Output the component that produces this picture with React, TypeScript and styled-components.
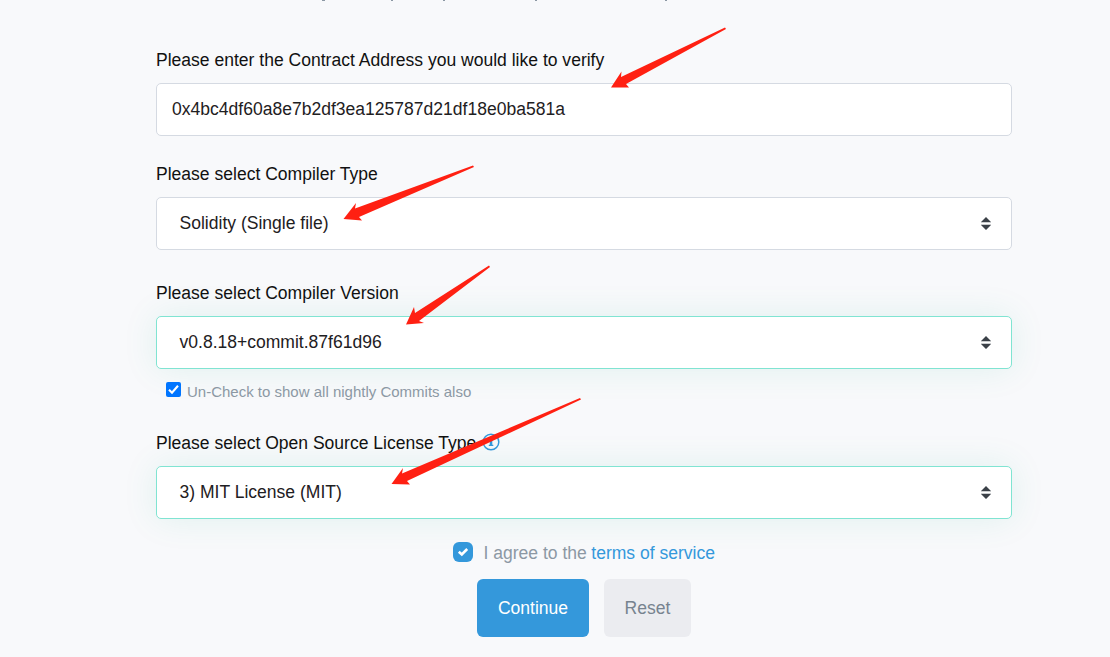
import React from "react";
import styled, { createGlobalStyle } from "styled-components";

const Global = createGlobalStyle`
  * { box-sizing: border-box; }
  body { margin: 0; background: #f8f9fb; font-family: "Liberation Sans", Arial, sans-serif; font-size: 17.55px; color: #1e2022; overflow: hidden; }
`;
const Page = styled.main`
  position: relative; width: 1110px; height: 657px; padding: 46px 98px 0 156px; overflow: hidden;
  display: flex; flex-direction: column;
`;
const Label = styled.label<{ $gap?: number }>`
  display: flex; align-items: center; height: 28px; margin: ${p => p.$gap ?? 0}px 0 9px; line-height: 28px; color: #111;
  white-space: nowrap;
`;
const InfoIcon = styled.svg`margin: -2px 0 0 6px;`;
const Field = styled.div<{ $valid?: boolean; $pad?: number }>`
  display: flex; align-items: center; justify-content: space-between; flex: none; height: 53px;
  padding: 0 19px 1px ${p => p.$pad ?? 22.5}px; background: #fff; border-radius: 5px;
  border: 1px solid ${p => (p.$valid ? "#80e4d2" : "#d5dae2")};
  box-shadow: ${p => (p.$valid ? "0 0 35px rgba(0, 170, 130, 0.1)" : "none")};
  white-space: nowrap;
`;
const Nightly = styled.label`
  display: flex; align-items: center; height: 24px; margin: 9px 0 0 10px; gap: 6px; font-size: 15px; color: #8c98a4; white-space: nowrap;
`;
const NightlyBox = styled.svg`margin-top: -2px;`;
const NightlyText = styled.span`padding-top: 2px;`;
const Agree = styled.label`
  display: flex; align-items: center; align-self: center; height: 28px; margin-top: 20px; color: #8c98a4; white-space: nowrap;
`;
const AgreeBox = styled.svg`margin: -2px 10.5px 0 0;`;
const Link = styled.a`color: #3498db; margin-left: 4.5px;`;
const Actions = styled.div`display: flex; justify-content: center; gap: 15px; margin-top: 12px;`;
const Button = styled.button<{ $primary?: boolean }>`
  width: ${p => (p.$primary ? 112 : 87)}px; height: 58px; padding: 0; border: 0; border-radius: 6px; font: inherit;
  background: ${p => (p.$primary ? "#3498db" : "#ebecf0")}; color: ${p => (p.$primary ? "#fff" : "#77838f")};
`;
const Overlay = styled.svg`position: absolute; left: 0; top: 0; pointer-events: none;`;

const Caret = () => (
  <svg width="12" height="14" viewBox="0 0 12 14">
    <path d="M6 1 11 6H1zM1 9h10L6 14z" fill="#3b4148" />
    <path d="M1 6h10v.5H1zM1 8.500h10v.5H1z" fill="#9a9da2" />
  </svg>
);

export default function App() {
  return (
    <Page>
      <Global />
      <Label><span>Please enter the Contract Address you would like to verify</span></Label>
      <Field $pad={15}><span>0x4bc4df60a8e7b2df3ea125787d21df18e0ba581a</span></Field>
      <Label $gap={24}><span>Please select Compiler Type</span></Label>
      <Field><span>Solidity (Single file)</span><Caret /></Field>
      <Label $gap={29}><span>Please select Compiler Version</span></Label>
      <Field $valid><span>v0.8.18+commit.87f61d96</span><Caret /></Field>
      <Nightly>
        <NightlyBox width="15" height="15" viewBox="0 0 15 15"><rect width="15" height="15" rx="2" fill="#0075ff" /><path d="M3 7.7 6 10.7 12 3.8" fill="none" stroke="#fff" strokeWidth="2.1" /></NightlyBox>
        <NightlyText>Un-Check to show all nightly Commits also</NightlyText>
      </Nightly>
      <Label $gap={27}><span>Please select Open Source License Type</span>
        <InfoIcon width="18" height="18" viewBox="0 0 18 18"><circle cx="9" cy="9" r="7.8" fill="none" stroke="#3498db" strokeWidth="1.5" /><path d="M8 4h2.3v2H8zM7 7.3h3.3v4.5h1V13H6.8v-1.2h1V8.5H7z" fill="#3498db" /></InfoIcon>
      </Label>
      <Field $valid><span>3) MIT License (MIT)</span><Caret /></Field>
      <Agree>
        <AgreeBox width="20" height="20" viewBox="0 0 20 20"><rect width="20" height="20" rx="6" fill="#3498db" /><path d="M5.800 9.800 8.800 12.500 14.200 7" fill="none" stroke="#fff" strokeWidth="2.6" /></AgreeBox>
        <span>I agree to the</span><Link>terms of service</Link>
      </Agree>
      <Actions><Button $primary><span>Continue</span></Button><Button><span>Reset</span></Button></Actions>
      <Overlay width="1110" height="657" viewBox="0 0 1110 657" fill="#ff2012">
        <path d="M322 0h3v1h-3zM391 0h2v1h-2zM443 0h2v1h-2zM535 0h2v1h-2zM665 0h2v1h-2z" fill="#8c98a4" />
        <path d="M611 87.5 621.5 71.500 621 77 725 27.500 726 29 626 84 629 87.500Z" />
        <path d="M343.500 219 356 203 355 208.500 473 165.500 474 167 359 217 362 220.500Z" />
        <path d="M406 324.500 414 307 415 313 489 265.500 490 267 419 321 424 323Z" />
        <path d="M391.500 484 403 468 402 473.500 580 398 581 399.500 407 481 410 484.500Z" />
      </Overlay>
    </Page>
  );
}
